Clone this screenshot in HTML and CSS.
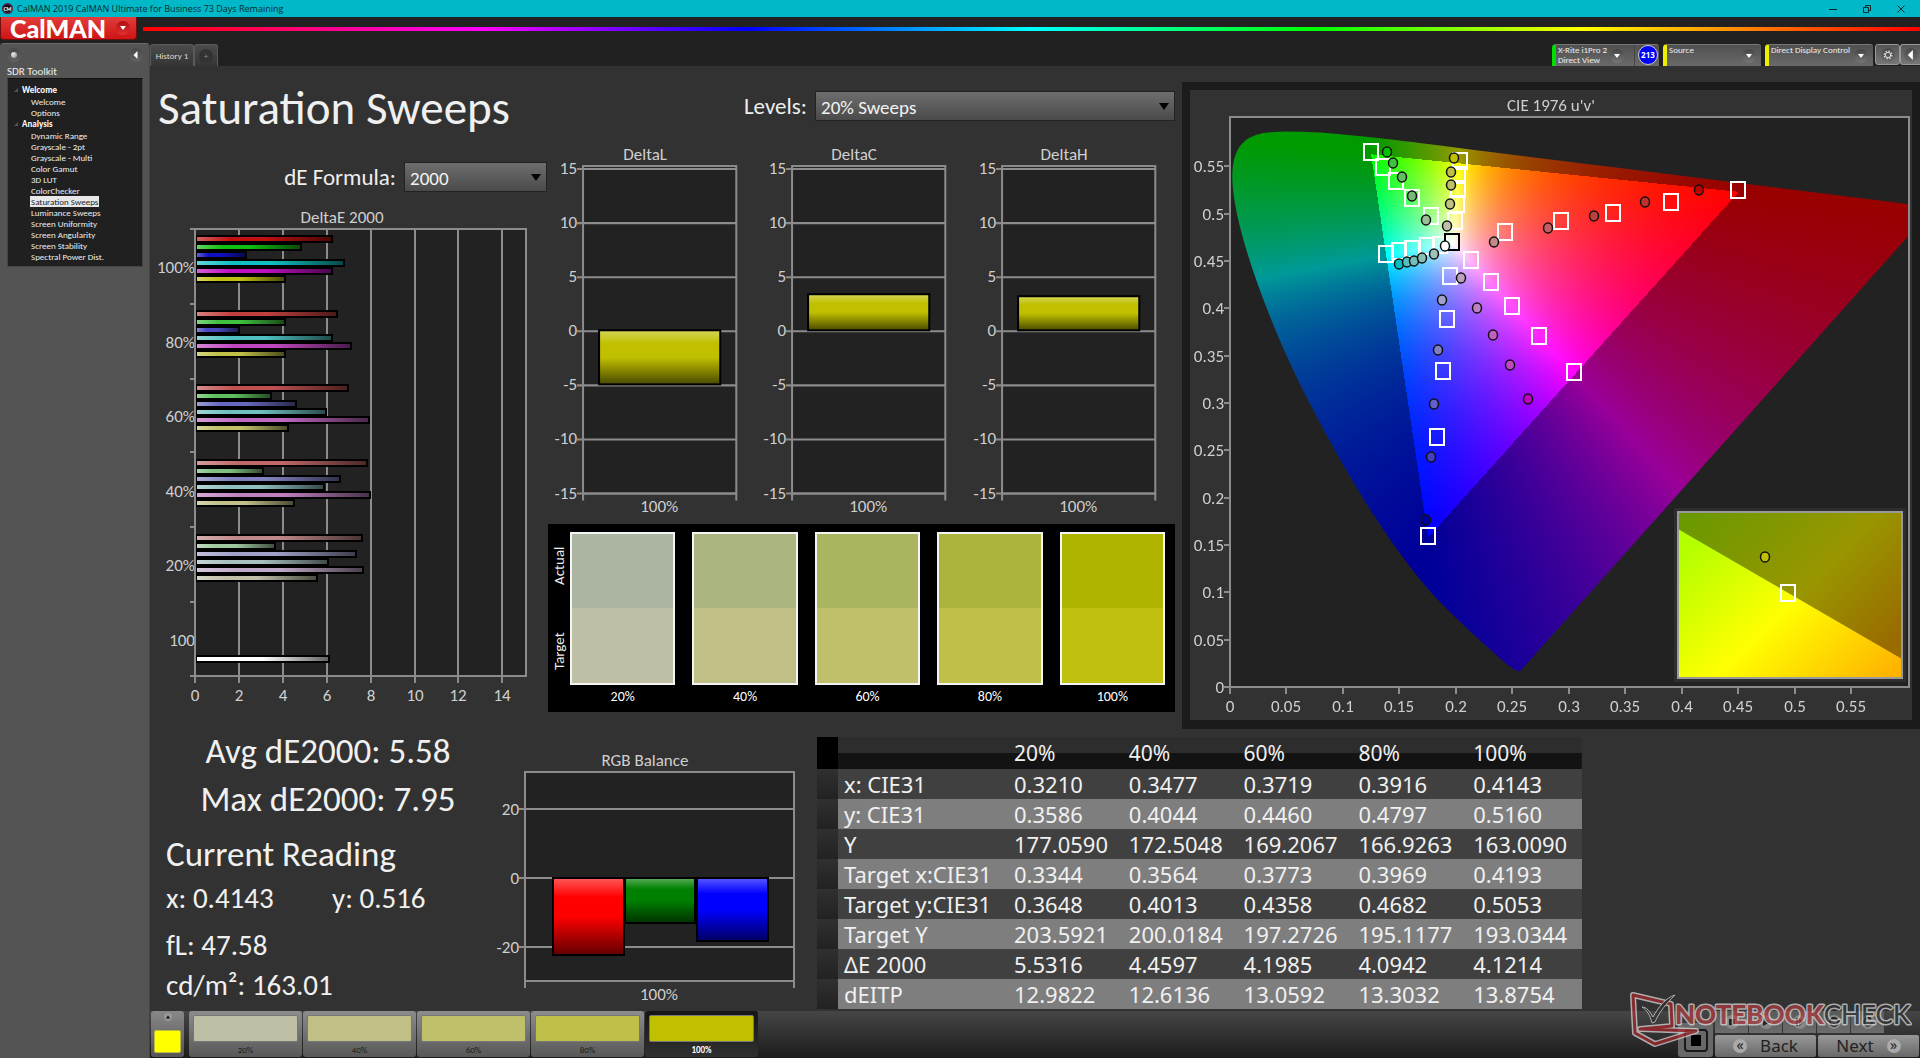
FILE: index.html
```html
<!DOCTYPE html>
<html lang="en">
<head>
<meta charset="utf-8">
<title>CalMAN 2019 CalMAN Ultimate for Business 73 Days Remaining</title>
<link rel="stylesheet" href="styles.css">
</head>
<body>
<header class="titlebar">
  <svg class="app-icon" viewBox="0 0 12 12"><circle cx="6" cy="6" r="6" fill="#111"/><circle cx="6" cy="6" r="5.2" fill="none" stroke="#a24ab0" stroke-width=".8"/><text x="6" y="8.2" text-anchor="middle">CM</text></svg>
  <span class="titlebar-text">CalMAN 2019 CalMAN Ultimate for Business 73 Days Remaining</span>
  <div class="window-controls">
    <button aria-label="Minimize"><svg viewBox="0 0 10 10"><path d="M1 5.5h8"/></svg></button>
    <button aria-label="Restore"><svg viewBox="0 0 10 10"><path d="M1.5 3.5h5v5h-5zM3.5 3.5v-2h5v5h-2"/></svg></button>
    <button aria-label="Close"><svg viewBox="0 0 10 10"><path d="M1.5 1.5l7 7M8.500 1.500l-7 7"/></svg></button>
  </div>
</header>
<div class="brandbar">
  <button class="brand">CalMAN <span class="round round-red"><svg viewBox="0 0 8 6"><path d="M1 1h6L4 5z" fill="#fff"/></svg></span></button>
  <div class="spectrum"></div>
</div>
<div class="body">
  <aside class="sidebar">
    <div class="sidebar-tools">
      <button class="round" aria-label="Pin"><span class="knob"></span></button>
      <button class="round" aria-label="Collapse"><svg viewBox="0 0 8 8"><path d="M5.500 0v8L1.500 4z" fill="#fff"/></svg></button>
    </div>
    <h2>SDR Toolkit</h2>
    <nav class="tree">
      <h3><i></i>Welcome</h3>
      <ul><li><a href="#">Welcome</a></li><li><a href="#">Options</a></li></ul>
      <h3><i></i>Analysis</h3>
      <ul>
        <li><a href="#">Dynamic Range</a></li><li><a href="#">Grayscale - 2pt</a></li><li><a href="#">Grayscale - Multi</a></li>
        <li><a href="#">Color Gamut</a></li><li><a href="#">3D LUT</a></li><li><a href="#">ColorChecker</a></li>
        <li><a href="#" class="current">Saturation Sweeps</a></li><li><a href="#">Luminance Sweeps</a></li><li><a href="#">Screen Uniformity</a></li>
        <li><a href="#">Screen Angularity</a></li><li><a href="#">Screen Stability</a></li><li><a href="#">Spectral Power Dist.</a></li>
      </ul>
    </nav>
  </aside>
  <div class="content">
    <div class="tabs">
      <button class="tab">History 1</button>
      <button class="tab tab-add" aria-label="Add tab"><span class="round">+</span></button>
      <div class="devices">
        <button class="device device-meter"><span>X-Rite i1Pro 2<br>Direct View</span><span class="round"><svg viewBox="0 0 8 6"><path d="M1 1h6L4 5z" fill="#fff"/></svg></span><span class="divider"></span><span class="count">213</span></button>
        <button class="device"><span>Source</span><span class="round"><svg viewBox="0 0 8 6"><path d="M1 1h6L4 5z" fill="#fff"/></svg></span></button>
        <button class="device device-display"><span>Direct Display Control</span><span class="round"><svg viewBox="0 0 8 6"><path d="M1 1h6L4 5z" fill="#fff"/></svg></span></button>
        <button class="square" aria-label="Settings"><span class="round"><svg viewBox="0 0 12 12"><circle cx="6" cy="6" r="3.200" fill="none" stroke="#ddd" stroke-width="1.200"/><circle cx="6" cy="6" r="4.600" fill="none" stroke="#ddd" stroke-width="1.500" stroke-dasharray="1.800 1.810"/></svg></span></button>
        <button class="square square-last" aria-label="Hide"><span class="round"><svg viewBox="0 0 8 8"><path d="M5.500 0v8L1.500 4z" fill="#fff"/></svg></span></button>
      </div>
    </div>
    <main>
      <div class="upper">
        <section class="col-left">
          <h1>Saturation Sweeps</h1>
          <div class="field"><label for="formula">dE Formula:</label><select id="formula"><option>2000</option></select></div>
          <svg id="delta-e" class="chart" viewBox="0 0 397 510"></svg>
        </section>
        <section class="col-mid">
          <div class="field field-wide"><label for="levels">Levels:</label><select id="levels"><option>20% Sweeps</option></select></div>
          <div class="deltas">
            <svg id="delta-l" class="chart" viewBox="0 0 209 377"></svg>
            <svg id="delta-c" class="chart" viewBox="0 0 209 377"></svg>
            <svg id="delta-h" class="chart" viewBox="0 0 209 377"></svg>
          </div>
          <div class="compare">
            <div class="compare-side"><span class="side-target">Target</span><span>Actual</span></div>
            <figure><div class="pair p20"></div><figcaption>20%</figcaption></figure>
            <figure><div class="pair p40"></div><figcaption>40%</figcaption></figure>
            <figure><div class="pair p60"></div><figcaption>60%</figcaption></figure>
            <figure><div class="pair p80"></div><figcaption>80%</figcaption></figure>
            <figure><div class="pair p100"></div><figcaption>100%</figcaption></figure>
          </div>
        </section>
        <section class="cie">
          <canvas id="gamut" width="679" height="570"></canvas>
          <svg id="cie" class="chart" viewBox="0 0 738 647"></svg>
        </section>
      </div>
      <div class="lower">
        <section class="stats">
          <p class="big center">Avg dE2000: 5.58</p>
          <p class="big center">Max dE2000: 7.95</p>
          <p class="big spaced">Current Reading</p>
          <p class="xy"><span>x: 0.4143</span><span>y: 0.516</span></p>
          <p class="spaced">fL: 47.58</p>
          <p>cd/m²: 163.01</p>
        </section>
        <svg id="rgb" class="chart" viewBox="0 0 327 282"></svg>
        <table>
          <thead><tr><td class="mark"></td><th></th><th>20%</th><th>40%</th><th>60%</th><th>80%</th><th>100%</th></tr></thead>
          <tbody>
            <tr><td class="mark"></td><th>x: CIE31</th><td>0.3210</td><td>0.3477</td><td>0.3719</td><td>0.3916</td><td>0.4143</td></tr>
            <tr><td class="mark"></td><th>y: CIE31</th><td>0.3586</td><td>0.4044</td><td>0.4460</td><td>0.4797</td><td>0.5160</td></tr>
            <tr><td class="mark"></td><th>Y</th><td>177.0590</td><td>172.5048</td><td>169.2067</td><td>166.9263</td><td>163.0090</td></tr>
            <tr><td class="mark"></td><th>Target x:CIE31</th><td>0.3344</td><td>0.3564</td><td>0.3773</td><td>0.3969</td><td>0.4193</td></tr>
            <tr><td class="mark"></td><th>Target y:CIE31</th><td>0.3648</td><td>0.4013</td><td>0.4358</td><td>0.4682</td><td>0.5053</td></tr>
            <tr><td class="mark"></td><th>Target Y</th><td>203.5921</td><td>200.0184</td><td>197.2726</td><td>195.1177</td><td>193.0344</td></tr>
            <tr><td class="mark"></td><th>ΔE 2000</th><td>5.5316</td><td>4.4597</td><td>4.1985</td><td>4.0942</td><td>4.1214</td></tr>
            <tr><td class="mark"></td><th>dEITP</th><td>12.9822</td><td>12.6136</td><td>13.0592</td><td>13.3032</td><td>13.8754</td></tr>
          </tbody>
        </table>
      </div>
    </main>
    <footer>
      <button class="picker" aria-label="Current patch"><span class="round round-small"><svg viewBox="0 0 8 6"><path d="M1 5h6L4 1z" fill="#111"/></svg></span><span class="chip"></span></button>
      <div class="patches">
        <button class="patch c20"><span></span>20%</button>
        <button class="patch c40"><span></span>40%</button>
        <button class="patch c60"><span></span>60%</button>
        <button class="patch c80"><span></span>80%</button>
        <button class="patch c100 active"><span></span>100%</button>
      </div>
      <div class="transport">
        <button class="stop" aria-label="Stop"><span></span></button>
        <div class="transport-main">
          <div class="mini">
            <button aria-label="Stop reading"><svg viewBox="0 0 14 14"><path d="M4 4h6v6H4z"/></svg></button>
            <button aria-label="Play"><svg viewBox="0 0 14 14"><path d="M4 3l7 4-7 4z"/></svg></button>
            <button aria-label="Step"><svg viewBox="0 0 14 14"><path d="M3 3h2v8H3zM6 3l5 4-5 4z"/></svg></button>
            <button aria-label="Loop"><svg viewBox="0 0 14 14"><path d="M3 7a4 4 0 0 1 8 0M11 7a4 4 0 0 1-8 0" fill="none" stroke="#222" stroke-width="2"/></svg></button>
            <button aria-label="Refresh"><svg viewBox="0 0 14 14"><path d="M10 4a4 4 0 1 0 1 3" fill="none" stroke="#222" stroke-width="2"/></svg></button>
          </div>
          <div class="nav-buttons">
            <button><span class="round round-light">«</span>Back</button>
            <button>Next<span class="round round-light">»</span></button>
          </div>
        </div>
      </div>
      <svg class="watermark" viewBox="0 0 290 60">
        <g class="wm-logo">
          <path d="M5 5L43 14L44 36L12 39L68 41L27 54L7 43Z"/>
          <path class="wm-red" d="M5 5L43 14L44 36L12 39L68 41L27 54L7 43Z"/>
          <path class="wm-check" d="M14 17C19 17 22 22 25 27C30 18 37 8 47 5C39 13 31 22 27 32L24 33C22 25 19 20 14 17Z"/>
        </g>
        <text x="47" y="34" class="wm-text"><tspan class="wm-note">NOTEBOOK</tspan><tspan class="wm-chk">CHECK</tspan></text>
      </svg>
    </footer>
  </div>
</div>
<script src="app.js"></script>
</body>
</html>
```
FILE: styles.css
```css
* { box-sizing: border-box; }
body {
  margin: 0; min-height: 100vh; display: flex; flex-direction: column;
  background: #212121; color: #eee;
  font-family: Carlito, Calibri, Lato, sans-serif; font-size: 9px;
}
h1, h2, h3, p, ul, figure { margin: 0; padding: 0; font-weight: normal; }
ul { list-style: none; }
button { border: 0; margin: 0; padding: 0; background: none; color: inherit; font: inherit; }
svg { display: block; }

.titlebar { height: 17px; background: #00b8c8; color: #0a2a2e; display: flex; align-items: center; padding-left: 2px; gap: 4px; }
.app-icon { width: 11px; height: 11px; }
.app-icon text { fill: #fff; font-size: 6px; font-weight: bold; }
.titlebar-text { font-family: "Open Sans", "Noto Sans", sans-serif; font-size: 9px; flex: 1; }
.window-controls { display: flex; padding-right: 2px; }
.window-controls button { width: 34px; display: flex; justify-content: center; }
.window-controls svg { width: 10px; height: 10px; fill: none; stroke: #0a2a2e; }

.brandbar { height: 26px; display: flex; align-items: flex-start; gap: 6px; }
.brand {
  width: 137px; height: 23px; padding: 0 6px 0 9px; display: flex; align-items: center; justify-content: space-between;
  background: linear-gradient(#e23c3c, #cf1414); border-radius: 0 0 4px 4px; border: 1px solid #6e1010; border-top: 0;
  font-family: Lato, sans-serif; font-weight: 900; font-size: 25px; line-height: 22px; color: #fff;
}
.spectrum {
  flex: 1; height: 4px; margin-top: 10px;
  background: linear-gradient(90deg, #f00, #f0f 19%, #00f 34%, #0ff 50%, #0f0 66%, #ff0 81%, #f00);
}
.round {
  width: 14px; height: 14px; border-radius: 50%; flex: none; display: flex; align-items: center; justify-content: center;
  background: linear-gradient(#4a4a4a, #6a6a6a);
}
.round svg { width: 8px; height: 8px; }
.round-red { background: linear-gradient(#b01010, #e03030); }
.round-small { width: 8px; height: 8px; background: #999; }
.round-small svg { width: 6px; height: 6px; }

.body { flex: 1; display: grid; grid-template-columns: 150px 1fr; }
.sidebar { background: #545454; border-radius: 4px 4px 0 0; padding: 4px 7px; border-right: 1px solid #444; border-top: 1px solid #6a6a6a; }
.sidebar-tools { display: flex; justify-content: space-between; height: 18px; margin-right: -1px; }
.sidebar-tools .round { background: linear-gradient(#484848, #626262); }
.knob { width: 6px; height: 6px; border-radius: 50%; background: radial-gradient(circle at 30% 30%, #eee, #888); }
.sidebar h2 { font-size: 11px; line-height: 12px; }
.tree { background: #202020; border: 1px solid #444; border-top-color: #111; margin-right: -1px; padding: 5px 0 4px; line-height: 11px; }
.tree h3 { font-size: 9px; font-weight: bold; line-height: 11px; margin-bottom: 1px; display: flex; align-items: center; gap: 4px; padding-left: 6px; color: #fff; }
.tree i { width: 0; height: 0; border-left: 4px solid transparent; border-bottom: 4px solid #555; }
.tree ul { padding-left: 22px; }
.tree a { color: #eee; text-decoration: none; display: inline-block; line-height: 11px; vertical-align: top; padding: 0 1px; }
.tree li { height: 11px; }
.tree .current { background: #e8e8e8; color: #222; }

.content { display: flex; flex-direction: column; min-width: 0; background: #323232; }
.tabs { height: 23px; background: #212121; display: flex; align-items: flex-end; }
.tab { height: 22px; width: 44px; background: linear-gradient(#4c4c4c, #343434); border: 1px solid #5a5a5a; border-bottom: 0; border-radius: 3px 3px 0 0; color: #ddd; white-space: nowrap; }
.tab-add { width: 24px; display: flex; align-items: center; justify-content: center; }
.tab-add .round { background: #333; color: #888; }
.devices { margin-left: auto; display: flex; gap: 4px; align-items: flex-end; }
.device {
  width: 98px; height: 22px; display: flex; align-items: flex-start; text-align: left; line-height: 10px; padding: 0 5px 0 2px; justify-content: space-between;
  background: linear-gradient(#505050, #6a6a6a); border-top: 1px solid #777; border-radius: 4px 3px 0 0; border-left: 4px solid #ee0; white-space: nowrap;
}
.device .round { align-self: center; background: linear-gradient(#444, #777); }
.device-meter { width: 107px; border-left-color: #0d0; padding-right: 1px; }
.device-display { width: 108px; }
.device-display .round { margin-left: -4px; }
.divider { width: 1px; background: #444; margin-left: 6px; align-self: stretch; }
.count { width: 20px; height: 20px; border: 1px solid #ccc; border-radius: 50%; background: #00f; color: #fff; font: bold 8px/18px "Noto Sans", sans-serif; text-align: center; }
.square { width: 25px; height: 21px; border: 1px solid #999; border-radius: 3px; background: linear-gradient(#555, #777); display: flex; align-items: center; justify-content: center; margin: 0 -2px 1px; }
.square svg { width: 10px; height: 10px; }
.square-last { width: 20px; border-right: 0; border-radius: 3px 0 0 3px; margin-right: 0; }

main { flex: 1; padding-top: 16px; }
.upper { display: grid; grid-template-columns: 397fr 635fr 738fr; }
.chart { width: 100%; height: auto; font-size: 17px; fill: #ccc; }
.chart text { fill: #cfcfcf; }
h1 { font-size: 47px; line-height: 52px; padding-left: 8px; color: #f0f0f0; white-space: nowrap; }
.field { position: relative; display: flex; align-items: center; justify-content: flex-end; gap: 8px; font-size: 23px; margin: 28px 0 8px; height: 30px; }
.field select {
  appearance: none; width: 143px; height: 30px; padding: 3px 4px 0 5px; border: 1px solid #222; border-radius: 0;
  background: linear-gradient(#6e6e6e, #4a4a4a); color: #f2f2f2; font: inherit; font-size: 19px;
}
.field::after { content: ""; position: absolute; right: 6px; top: 12px; border: 5px solid transparent; border-top: 7px solid #000; border-bottom: 0; }
.field-wide { margin: 9px 0 20px; }
.field-wide select { width: 360px; }
.col-mid { padding-right: 7px; }
.deltas { display: grid; grid-template-columns: 1fr 1fr 1fr; }
.compare { background: #000; margin: 5px 0 0 1px; padding: 8px 10px 3px 0; display: grid; grid-template-columns: 5px repeat(5, 1fr); gap: 17px; }
.compare-side { width: 22px; height: 153px; writing-mode: vertical-rl; transform: rotate(180deg); display: flex; justify-content: space-between; font-size: 15px; line-height: 22px; }
.compare-side span { flex: 0 0 68px; text-align: center; }
.pair { height: 153px; border: 2px solid #f4f4f4; }
.p20 { background: linear-gradient(#abb5a1 50%, #bfbfa5 50%); }
.p40 { background: linear-gradient(#abb580 50%, #c0bf86 50%); }
.p60 { background: linear-gradient(#abb560 50%, #c0bf6b 50%); }
.p80 { background: linear-gradient(#acb43e 50%, #bfc04a 50%); }
.p100 { background: linear-gradient(#aeb400 50%, #c0c010 50%); }
.compare figcaption { font-size: 14px; line-height: 24px; text-align: center; color: #fff; }
.cie { position: relative; }
.cie canvas { position: absolute; left: 6.504%; top: 5.41%; width: 92.005%; height: 88.099%; background: #222; }
.cie svg { position: relative; }

.lower { display: grid; grid-template-columns: 340fr 327fr 765fr 338fr; align-items: start; }
.stats { font-size: 29px; line-height: 40px; padding-left: 16px; white-space: nowrap; color: #f0f0f0; margin-top: -2px; }
.big { font-size: 35px; line-height: 48px; }
.center { text-align: center; }
.spaced { margin-top: 7px; }
.xy { display: grid; grid-template-columns: 166px 1fr; }

table { margin-top: 8px; width: 100%; table-layout: fixed; border-collapse: collapse; font-family: "Noto Sans", "Open Sans", sans-serif; font-size: 22px; line-height: 30px; color: #f0f0f0; }
th, td { padding: 0 0 0 6px; text-align: left; font-weight: normal; white-space: nowrap; height: 30px; }
th:nth-child(2) { width: 170px; }
.mark { width: 21px; background: linear-gradient(#303030, #222); padding: 0; }
thead tr { background: linear-gradient(#2d2d2d 50%, #131313 50%); }
thead th { height: 32px; font-size: 21px; }
thead .mark { background: #000; }
tbody tr { background: #404040; }
tbody tr:nth-child(even) { background: #7e7e7e; }

footer { position: relative; height: 47px; display: flex; background: linear-gradient(#464646, #1c1c1c); padding-left: 1px; }
.picker { width: 33px; height: 46px; background: linear-gradient(#888, #555); border-radius: 3px; display: flex; flex-direction: column; align-items: center; justify-content: space-between; padding: 2px 0 4px; margin-right: 5px; }
.picker .chip { width: 27px; height: 23px; background: #ff0; border: 1px solid #bb4; border-radius: 2px; }
.patches { display: flex; gap: 1px; }
.patch { width: 113px; height: 46px; background: linear-gradient(#8c8c8c, #585858); border-radius: 3px; padding: 4px 4px 0; display: flex; flex-direction: column; color: #1c1c1c; line-height: 15px; text-align: center; }
.patch span { display: block; flex: none; height: 27px; border: 1px solid #777; border-radius: 2px; }
.c20 span { background: #bfbfa5; }
.c40 span { background: #c0bf86; }
.c60 span { background: #c0bf6b; }
.c80 span { background: #bfc04a; }
.c100 span { background: #c0c000; }
.patch.active { background: linear-gradient(#161616, #303030); color: #fff; font-weight: bold; }
.transport { margin-left: auto; display: flex; align-items: flex-end; gap: 2px; padding: 0 1px 1px 0; }
.stop { width: 35px; height: 34px; background: #686868; border-radius: 3px; display: flex; align-items: center; justify-content: center; }
.stop span { width: 24px; height: 23px; border: 2px solid #1a1a1a; border-radius: 4px; background: content-box #000; padding: 4px 5px; }
.transport-main { display: flex; flex-direction: column; gap: 2px; }
.mini { display: flex; gap: 1px; }
.mini button { width: 33px; height: 22px; background: linear-gradient(#5a5a5a, #6c6c6c); display: flex; align-items: center; justify-content: center; }
.mini svg { width: 14px; height: 14px; background: #888; border-radius: 50%; fill: #222; }
.nav-buttons { display: flex; gap: 2px; }
.nav-buttons button { width: 101px; height: 22px; background: linear-gradient(#989898, #686868); border-radius: 2px; color: #222; font-family: "Noto Sans", sans-serif; font-size: 17px; line-height: 22px; display: flex; align-items: center; justify-content: center; gap: 13px; padding: 0 5px; }
.round-light { background: #aaa; font-size: 14px; line-height: 12px; padding-bottom: 2px; }
.watermark { position: absolute; right: 2px; bottom: 8px; width: 290px; height: 60px; opacity: 0.72; }
.wm-logo path { fill: none; stroke: #ddd; stroke-width: 6; stroke-linejoin: round; }
.wm-logo .wm-red { stroke: #a8282c; stroke-width: 3; }
.wm-logo .wm-check { fill: #333; stroke: #ddd; stroke-width: 1; }
.wm-text { font-family: Lato, sans-serif; font-size: 26px; stroke: #ddd; stroke-width: 3; paint-order: stroke; stroke-linejoin: round; }
.wm-note { font-weight: 900; fill: #b03c40; }
.wm-chk { font-weight: 500; fill: #333; }
```
FILE: app.js
```js
const GRID = "#8c8c8c";
const line = (x1, y1, x2, y2, c = GRID, w = 2) => `<line x1="${x1}" y1="${y1}" x2="${x2}" y2="${y2}" stroke="${c}" stroke-width="${w}"/>`;
const text = (x, y, t, a = "middle") => `<text x="${x}" y="${y}" text-anchor="${a}">${t}</text>`;
const plot = (x, y, w, h) => `<rect x="${x}" y="${y}" width="${w}" height="${h}" fill="#222" stroke="${GRID}" stroke-width="2"/>`;
const shade = (id, dir) => `<defs><linearGradient id="${id}" ${dir}><stop offset="0" stop-color="#fff" stop-opacity=".35"/><stop offset=".25" stop-color="#fff" stop-opacity="0"/><stop offset=".5" stop-color="#000" stop-opacity="0"/><stop offset="1" stop-color="#000" stop-opacity=".62"/></linearGradient></defs>`;
const bar = (x, y, w, h, c, id) => `<rect x="${x}" y="${y}" width="${w}" height="${h}" fill="${c}"/><rect x="${x}" y="${y}" width="${w}" height="${h}" fill="url(#${id})" stroke="#000" stroke-width="2"/>`;
const put = (id, html) => { document.getElementById(id).innerHTML = html; };

/* DeltaE 2000 by saturation level */
{
  let s = shade("gx", 'x2="1" y2="0"') + text(192, 23, "DeltaE 2000") + plot(45, 29, 331, 447);
  for (let i = 0; i < 8; i++) {
    const x = Math.round(45 + i * 43.900);
    if (i) s += line(x, 29, x, 476);
    s += line(x, 476, x, 483) + text(x, 501, i * 2);
  }
  [29, 104, 179, 252, 327, 402, 476].forEach(y => { s += line(40, y, 46, y); });
  ["100%", "80%", "60%", "40%", "20%", "100"].forEach((t, i) => { s += text(45, 73 + Math.round(i * 74.600), t, "end"); });
  const groups = [
    [36, [183, 152, 97, 195, 183, 136], ["#c01010", "#10c010", "#1010c0", "#10c0c0", "#c010c0", "#c0c010"]],
    [111, [188, 136, 90, 183, 202, 136], ["#c04040", "#40c040", "#4848c0", "#50c0c0", "#c048c0", "#c0c048"]],
    [185, [199, 122, 147, 177, 220, 139], ["#c05050", "#60c060", "#6868c0", "#70c0c0", "#c068c0", "#c0c068"]],
    [260, [218, 114, 191, 175, 221, 145], ["#c06868", "#80c080", "#8080c0", "#90c0c0", "#c080c0", "#c0c088"]],
    [335, [213, 126, 207, 179, 214, 168], ["#c08888", "#a0c8a0", "#a0a0c8", "#a8c0c0", "#c0a8c8", "#c0c0a8"]],
    [456, [180], ["#ffffff"]]
  ];
  groups.forEach(([y, ends, colors]) => ends.forEach((e, i) => { s += bar(46, y + i * 8, e - 47, 6, colors[i], "gx"); }));
  put("delta-e", s + line(45, 29, 45, 476));
}

/* DeltaL, DeltaC, DeltaH */
[["delta-l", "DeltaL", 189, 54], ["delta-c", "DeltaC", 153, 36], ["delta-h", "DeltaH", 155, 34]].forEach(([id, title, y, h]) => {
  let s = shade("g" + id, 'x2="0" y2="1"') + text(98, 19, title) + plot(36, 25, 153, 327);
  for (let v = 15; v >= -15; v -= 5) {
    const gy = Math.round(190 - v * 10.830);
    s += line(30, gy, 189, gy) + text(30, gy + 5, v, "end");
  }
  s += line(36, 352, 36, 359) + line(189, 352, 189, 359) + bar(52, y, 121, h, "#c0c000", "g" + id) + text(112, 370, "100%");
  put(id, s);
});

/* RGB balance */
{
  let s = shade("grgb", 'x2="0" y2="1"') + text(155, 37, "RGB Balance") + plot(35, 43, 269, 209);
  [[20, 80], [0, 149], [-20, 218]].forEach(([v, y]) => { s += line(29, y, 304, y) + text(29, y + 6, v, "end"); });
  s += line(35, 252, 35, 259) + line(304, 252, 304, 259);
  s += bar(63, 149, 71, 77, "#ff0000", "grgb") + bar(135, 149, 70, 45, "#008000", "grgb") + bar(207, 149, 71, 63, "#0000ff", "grgb");
  put("rgb", s + text(169, 271, "100%"));
}

/* CIE 1976 chromaticity fill */
const US = 1129, VS = 947, W = 679, H = 570;
{
  const locus = [[.2569, .0165], [.2522, .0169], [.2347, .035], [.2161, .0549], [.1877, .0871], [.169, .1119], [.1441, .151], [.1147, .2044], [.0828, .2708], [.0521, .3427], [.0282, .4117], [.0119, .4698], [.0035, .5131], [.0014, .5432], [.0046, .5638], [.0123, .577], [.0231, .5837], [.036, .5861], [.0501, .5868], [.0792, .5856], [.1127, .5821], [.1531, .5766], [.2623, .5604], [.4035, .5393], [.5203, .5219], [.6234, .5065]];
  const ctx = document.getElementById("gamut").getContext("2d");
  const img = ctx.createImageData(W, H);
  for (let py = 0; py < H; py++) for (let px = 0; px < W; px++) {
    const u = (px + .5) / US, v = (H - py - .5) / VS, d = 6 * u - 16 * v + 12;
    const x = 9 * u / d, y = 4 * v / d, X = x / y, Z = (1 - x - y) / y;
    const rgb = [3.2406 * X - 1.5372 - .4986 * Z, -.9689 * X + 1.8758 + .0415 * Z, .0557 * X - .204 + 1.057 * Z];
    const k = Math.min(...rgb) < 0 ? .6 : 1, m = Math.max(...rgb), o = (py * W + px) * 4;
    for (let i = 0; i < 3; i++) img.data[o + i] = k * 255 * Math.max(0, rgb[i]) / m;
    img.data[o + 3] = 255;
  }
  ctx.putImageData(img, 0, 0);
  ctx.globalCompositeOperation = "destination-in";
  ctx.beginPath();
  const p = locus.map(([u, v]) => [u * US, H - v * VS]);
  ctx.moveTo(...p[0]);
  for (let i = 1; i < p.length - 1; i++) ctx.quadraticCurveTo(...p[i], (p[i][0] + p[i + 1][0]) / 2, (p[i][1] + p[i + 1][1]) / 2);
  ctx.lineTo(...p[p.length - 1]);
  ctx.closePath();
  ctx.fill();
}

/* CIE frame, axes and markers */
{
  let s = `<path fill-rule="evenodd" fill="#1b1b1b" d="M0 0H738V647H0ZM8 8V638H730V8Z"/><path fill-rule="evenodd" fill="#323232" d="M8 8H730V638H8ZM48 35V605H727V35Z"/>` + `<rect x="48" y="35" width="679" height="570" fill="none" stroke="${GRID}" stroke-width="2"/>` + text(369, 29, "CIE 1976 u'v'");
  for (let i = 0; i < 12; i++) {
    const x = Math.round(48 + i * 56.460), y = Math.round(605 - i * 47.350), t = String(+(i * .05).toFixed(2));
    s += line(x, 605, x, 612) + text(x, 630, t) + line(42, y, 48, y) + text(42, y + 6, t, "end");
  }
  const sq = (x, y, c = "#fff") => `<rect x="${x - 7}" y="${y - 8}" width="14" height="16" fill="none" stroke="${c}" stroke-width="2"/>`;
  const dot = (x, y, c) => `<ellipse cx="${x}" cy="${y}" rx="4.500" ry="5" fill="${c}" stroke="#111" stroke-width="1.500"/>`;
  [[212, 126], [249, 170], [288, 212], [337, 263], [393, 319], [480, 154], [474, 196], [474, 238], [471, 281], [466, 332], [258, 433], [298, 422], [335, 418], [381, 409], [419, 405], [513, 451], [574, 517], [635, 589], [718, 679], [822, 787], [449, 499], [441, 628], [428, 783], [411, 981], [384, 1278], [615, 366], [783, 332], [939, 310], [1112, 276], [1315, 240]]
    .forEach(([x, y]) => { s += sq(Math.round(118 + x / 3), Math.round(28 + y / 3)); });
  s += sq(270, 160, "#000");
  [[262, 125, "#00c000"], [280, 159, "#40c040"], [306, 202, "#60c060"], [336, 258, "#78b878"], [379, 329, "#98c098"],
   [461, 144, "#c0c000"], [453, 187, "#c0c040"], [453, 224, "#c0c068"], [449, 282, "#c0c080"], [440, 348, "#c0c0a8"],
   [297, 461, "#00c0c0"], [320, 457, "#50c0c0"], [341, 452, "#70c0b8"], [366, 443, "#88c0b8"], [402, 433, "#a0c0b8"], [435, 409, "#fff"],
   [583, 396, "#c08888"], [743, 353, "#c06060"], [882, 319, "#c04040"], [1034, 276, "#c03030"], [1197, 240, "#c00000"],
   [484, 503, "#c0a0c0"], [531, 594, "#c080c0"], [578, 674, "#c060c0"], [631, 764, "#c048c0"], [683, 867, "#c000c0"],
   [427, 570, "#a0a0c8"], [414, 721, "#8080c0"], [401, 882, "#6060c8"], [393, 1042, "#4040c0"], [379, 1231, "#0000a0"]]
    .forEach(([x, y, c]) => { s += dot(Math.round(118 + x / 3), Math.round(28 + y / 3), c); });
  s += `<defs><linearGradient id="lit" x1="0" y1=".2" x2="1" y2=".9"><stop offset="0" stop-color="#b4ff00"/><stop offset=".48" stop-color="#ffff00"/><stop offset="1" stop-color="#ffb400"/></linearGradient>
    <linearGradient id="dim" x1="0" y1="0" x2="1" y2=".7"><stop offset="0" stop-color="#669900"/><stop offset=".6" stop-color="#999600"/><stop offset="1" stop-color="#996c00"/></linearGradient></defs>
    <rect x="492" y="426" width="232" height="174" fill="#2e2e2e"/><rect x="496" y="430" width="224" height="166" fill="url(#dim)"/>
    <path d="M496 447L720 577V596H496Z" fill="url(#lit)"/><rect x="496" y="430" width="224" height="166" fill="none" stroke="#999" stroke-width="2"/>`;
  put("cie", s + dot(583, 475, "#c0c000") + sq(606, 511));
}
```
